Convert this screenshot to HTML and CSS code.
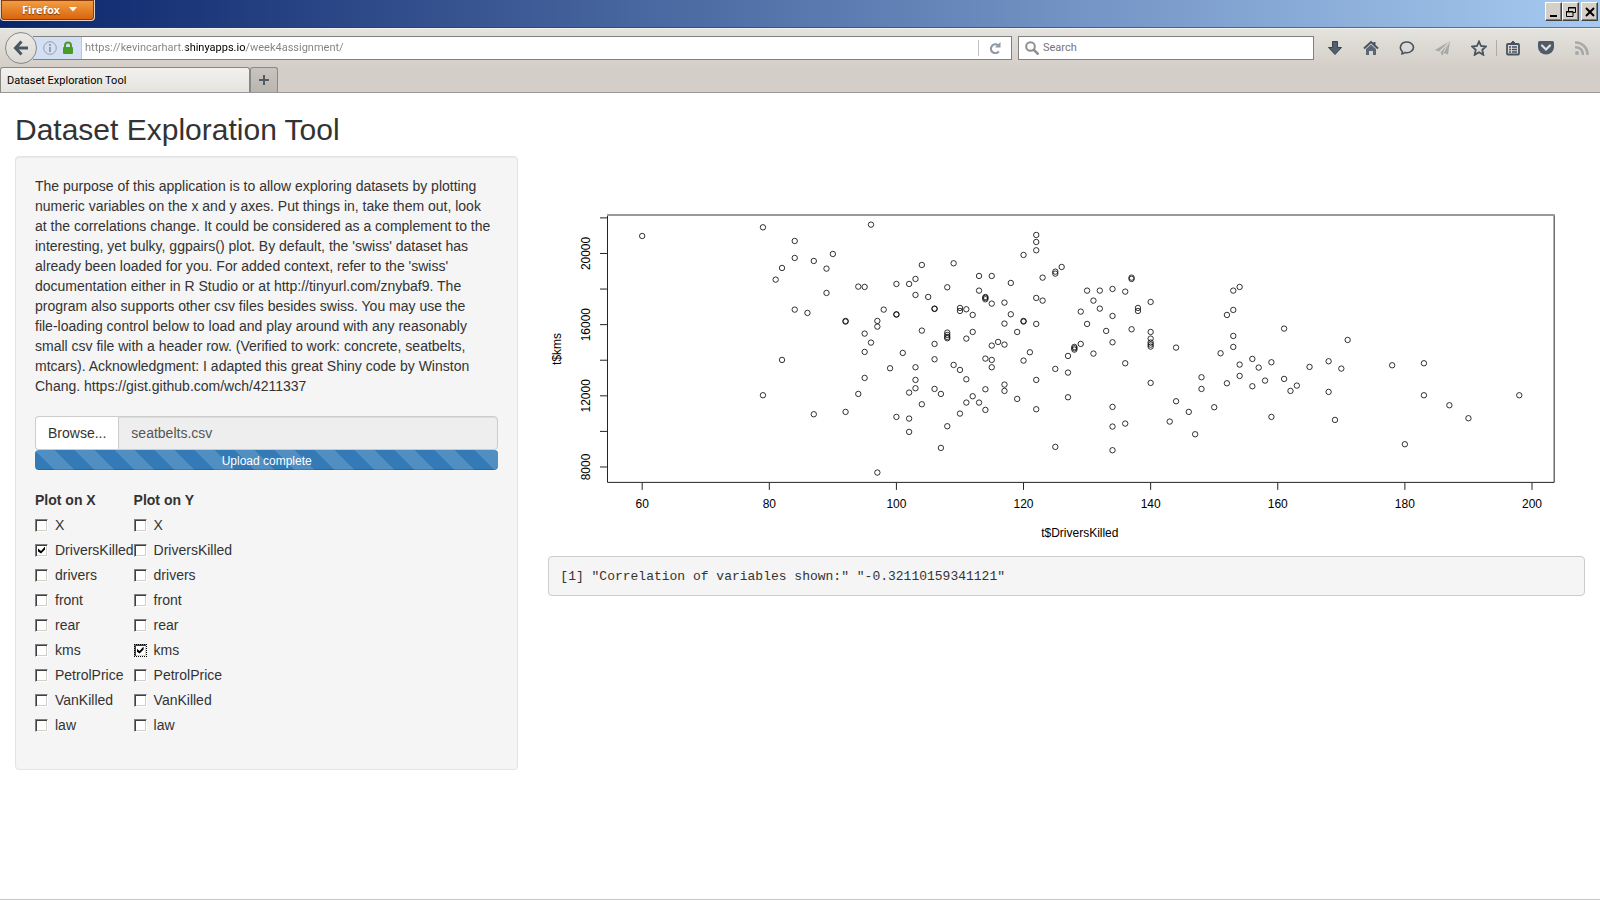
FILE: index.html
```html
<!DOCTYPE html>
<html lang="en">
	<head>
		<meta charset="utf-8">
		<title>Dataset Exploration Tool</title>
		<link rel="stylesheet" href="styles.css">
	</head>
	<body>
		<header class="browser">
			<div class="titlebar">
				<button class="firefox-btn">Firefox
					<svg width="8" height="5" viewBox="0 0 8 5"><path d="M0 0h8L4 4.5z" fill="#fff"/></svg>
				</button>
				<div class="window-btns">
					<button aria-label="Minimize"><svg width="12" height="12" viewBox="0 0 12 12"><path d="M2 9h7v2H2z"/></svg></button>
					<button aria-label="Restore"><svg width="12" height="12" viewBox="0 0 12 12" fill="none" stroke="#000"><path d="M3.5 5V1.5h7v5H8M3 2h8M1.5 5.500h6.500v5H1.500zM1 6h7"/></svg></button>
					<button class="close" aria-label="Close"><svg width="12" height="12" viewBox="0 0 12 12" fill="none" stroke="#000" stroke-width="2"><path d="M2 2l8 8M10 2l-8 8"/></svg></button>
				</div>
			</div>

			<div class="navbar">
				<button class="back" aria-label="Back">
					<svg width="16" height="16" viewBox="0 0 16 16" fill="none" stroke="#4a5763" stroke-width="3"><path d="M8.500 1.500L2.500 8l6 6.500M3 8h12"/></svg>
				</button>
				<div class="urlbar">
					<div class="identity">
						<svg width="14" height="14" viewBox="0 0 14 14" fill="none" stroke="#989ea6"><circle cx="7" cy="7" r="6.300"/><path d="M7 3v2M7 6v5" stroke-width="2"/></svg>
						<svg width="10" height="13" viewBox="0 0 10 13"><path d="M2 7V4.500a3 3 0 0 1 6 0V7" fill="none" stroke="#4b9b2a" stroke-width="2"/><rect y="6" width="10" height="7" rx="1" fill="#4b9b2a"/></svg>
					</div>
					<input class="url" type="text" aria-label="Address" value="https://kevincarhart.shinyapps.io/week4assignment/">
					<button class="reload" aria-label="Reload">
						<svg width="12" height="12" viewBox="0 0 12 12"><path d="M9 3.200A4.400 4.400 0 1 0 9.800 9.500" fill="none" stroke="#8d99a6" stroke-width="2.200"/><path d="M11.500 0v5.500H6z" fill="#8d99a6"/></svg>
					</button>
				</div>
				<div class="searchbar">
					<svg width="14" height="14" viewBox="0 0 14 14" fill="none" stroke="#8f8f8f" stroke-width="2"><circle cx="5.500" cy="5.500" r="4.300"/><path d="M8.500 8.500l5 5" stroke-width="2.500"/></svg>
					<input type="text" aria-label="Search" placeholder="Search">
				</div>
				<div class="tools">
					<button aria-label="Downloads"><svg width="16" height="16" viewBox="0 0 16 16" fill="#52606e" stroke="#36424e"><path d="M5.500 1.500h5v6h4L8 14.500l-6.500-7h4z"/></svg></button>
					<button aria-label="Home"><svg width="16" height="16" viewBox="0 0 16 16"><path d="M1 8.500l7-6.500 7 6.500M11.500 2v3" fill="none" stroke="#465360" stroke-width="2"/><path d="M3 9l5-4.500L13 9v6h-3v-4H6v4H3z" fill="#5b6874"/></svg></button>
					<button aria-label="Chat"><svg width="16" height="16" viewBox="0 0 16 16" fill="none" stroke="#465360" stroke-width="1.600"><path d="M3.500 11.800C-.5 8.500 1.500 2 7.700 2s8.800 6 4.800 9c-2 1.600-4.300 2-6.300 1.500-1.500 1.300-2.700 1.500-3.900 1.500 1-.5 1.400-1.200 1.200-2.200z"/></svg></button>
					<button aria-label="Share"><svg width="16" height="16" viewBox="0 0 16 16" fill="#a7a8a8"><path d="M15 1L0 10l4 1.500zM15 1L5.500 12.500 7 15.500l2-2.500 4 1.500z"/><path d="M14 2L5 11.500M14 2L8.500 12.500" stroke="#dad7d0" fill="none"/></svg></button>
					<button class="star" aria-label="Bookmark this page"><svg width="16" height="16" viewBox="0 0 16 16" fill="none" stroke="#465360" stroke-width="1.800"><path d="M8 1.500l2 4.500 5 .5-3.700 3.300 1 5L8 12.300l-4.300 2.500 1-5L1 6.500 6 6z"/></svg></button>
					<span class="separator"></span>
					<button class="list" aria-label="Bookmarks"><svg width="16" height="16" viewBox="0 0 16 16" fill="none" stroke="#465360"><rect x="2" y="4" width="12" height="10.500" rx="1" stroke-width="1.800"/><path d="M5 4l3-3 3 3z" fill="#465360"/><path d="M4 7h2M7 7h5M4 9.500h2M7 9.500h5M4 12h2M7 12h5" stroke-width="1.300"/></svg></button>
					<button aria-label="Pocket"><svg width="16" height="16" viewBox="0 0 16 16"><path d="M1.500 1h13Q16 1 16 2.500V7a8 7.500 0 0 1-16 0V2.500Q0 1 1.500 1z" fill="#4f5d6b"/><path d="M4 5.500l4 4 4-4" fill="none" stroke="#e4e2dc" stroke-width="2.200" stroke-linecap="round"/></svg></button>
					<button aria-label="Subscribe"><svg width="16" height="16" viewBox="0 0 16 16" fill="none" stroke="#a7a8a8" stroke-width="2.500"><circle cx="3" cy="13" r="2" fill="#a7a8a8" stroke="none"/><path d="M1 7.200A7 7 0 0 1 8.800 15M1 2.500A12 12 0 0 1 13.500 15"/></svg></button>
				</div>
			</div>

			<div class="tabs">
				<button class="tab">Dataset Exploration Tool</button>
				<button class="new-tab" aria-label="New tab"><svg width="10" height="10" viewBox="0 0 10 10"><path d="M4 0h2v4h4v2H6v4H4V6H0V4h4z" fill="#4f5b66"/></svg></button>
			</div>
		</header>

		<main class="page">
			<h2>Dataset Exploration Tool</h2>

			<div class="row">
				<form class="well">
					<p>
						The purpose of this application is to allow exploring datasets by plotting<br>
						numeric variables on the x and y axes. Put things in, take them out, look<br>
						at the correlations change. It could be considered as a complement to the<br>
						interesting, yet bulky, ggpairs() plot. By default, the 'swiss' dataset has<br>
						already been loaded for you. For added context, refer to the 'swiss'<br>
						documentation either in R Studio or at http://tinyurl.com/znybaf9. The<br>
						program also supports other csv files besides swiss. You may use the<br>
						file-loading control below to load and play around with any reasonably<br>
						small csv file with a header row. (Verified to work: concrete, seatbelts,<br>
						mtcars). Acknowledgment: I adapted this great Shiny code by Winston<br>
						Chang. https://gist.github.com/wch/4211337
					</p>

					<div class="file-group">
						<label class="browse">Browse...<input type="file" accept=".csv"></label>
						<input class="file-name" type="text" aria-label="Selected file" value="seatbelts.csv" readonly>
					</div>
					<div class="progress">Upload complete</div>

					<div class="variables">
						<fieldset>
							<legend>Plot on X</legend>
							<label><input type="checkbox" name="x">X</label>
							<label><input type="checkbox" name="x" checked>DriversKilled</label>
							<label><input type="checkbox" name="x">drivers</label>
							<label><input type="checkbox" name="x">front</label>
							<label><input type="checkbox" name="x">rear</label>
							<label><input type="checkbox" name="x">kms</label>
							<label><input type="checkbox" name="x">PetrolPrice</label>
							<label><input type="checkbox" name="x">VanKilled</label>
							<label><input type="checkbox" name="x">law</label>
						</fieldset>
						<fieldset>
							<legend>Plot on Y</legend>
							<label><input type="checkbox" name="y">X</label>
							<label><input type="checkbox" name="y">DriversKilled</label>
							<label><input type="checkbox" name="y">drivers</label>
							<label><input type="checkbox" name="y">front</label>
							<label><input type="checkbox" name="y">rear</label>
							<label><input class="focused" type="checkbox" name="y" checked>kms</label>
							<label><input type="checkbox" name="y">PetrolPrice</label>
							<label><input type="checkbox" name="y">VanKilled</label>
							<label><input type="checkbox" name="y">law</label>
						</fieldset>
					</div>
				</form>

				<div class="output">
					<svg class="plot" id="plot" viewBox="0 0 1037 400" role="img" aria-label="Scatter plot of kms against DriversKilled">
						<path class="frame" d="M59.500 59v267.500H1006.500V59"/>
						<path class="frame-top" d="M59 59h948"/>
						<text x="532" y="381">t$DriversKilled</text>
						<text transform="translate(13 193) rotate(-90)">t$kms</text>
					</svg>
					<pre>[1] "Correlation of variables shown:" "-0.32110159341121"</pre>
				</div>
			</div>
		</main>

		<script src="plot.js"></script>
	</body>
</html>
```
FILE: styles.css
```css
* {
	box-sizing: border-box;
}

body {
	margin: 0;
	min-height: 100vh;
	background: #fff;
	border-bottom: 1px solid #c8c8c8;
	color: #333;
	font-family: "Liberation Sans", Arial, sans-serif;
	font-size: 14px;
	line-height: 20px;
}

button,
input {
	font-family: inherit;
}

button {
	display: flex;
	align-items: center;
	justify-content: center;
	margin: 0;
	padding: 0;
	border: none;
	background: none;
}

/* Browser window */
.browser {
	background: #d4cec8;
	border-bottom: 1px solid #999;
	font-family: Roboto, Tahoma, sans-serif;
	font-size: 11px;
}

.titlebar {
	display: flex;
	justify-content: space-between;
	align-items: flex-start;
	height: 28px;
	background: linear-gradient(90deg, #0a246a, #a6caf0);
	border-bottom: 1px solid rgba(30, 60, 110, 0.6);
}

.firefox-btn {
	gap: 9px;
	width: 95px;
	height: 21px;
	padding: 0 0 2px 4px;
	background: linear-gradient(#f3a143, #d8620c);
	border: 1px solid #dfd2cf;
	border-top: none;
	border-radius: 0 0 4px 4px;
	box-shadow: inset 0 0 0 1px #8a3c0c;
	color: #fff;
	font-family: "Noto Sans", Tahoma, sans-serif;
	font-size: 11px;
	font-weight: bold;
	text-shadow: 0 1px 1px #7a3500;
}

.window-btns {
	display: flex;
	padding: 2px 2px 0 0;
}

.window-btns button {
	width: 17px;
	height: 19px;
	background: #d4d0c8;
	border: 1px solid;
	border-color: #fff #404040 #404040 #fff;
	box-shadow: inset -1px -1px #808080;
}

.window-btns .close {
	margin-left: 2px;
}

.navbar {
	display: flex;
	align-items: center;
	height: 39px;
	padding: 0 0 1px 5px;
	background: linear-gradient(#e4e3dd, #d4cec8);
	border-top: 1px solid #f1f0ec;
}

.back {
	z-index: 1;
	width: 32px;
	height: 32px;
	background: linear-gradient(#eceae6, #dcd9d4);
	border: 1px solid #888;
	border-radius: 50%;
}

.urlbar,
.searchbar {
	display: flex;
	align-items: center;
	height: 24px;
	background: #fff;
	border: 1px solid #808080;
}

.urlbar {
	flex: 1;
	margin: 0 6px 0 -4px;
	border-left: none;
}

.identity {
	display: flex;
	align-items: center;
	gap: 6px;
	height: 100%;
	padding: 0 8px 0 10px;
	background: #d3dff2;
	border-right: 1px solid #b9c6da;
}

.url {
	flex: 1;
	min-width: 0;
	padding: 0 0 0 3px;
	border: none;
	outline: none;
	/* the domain is darker than the rest of the address */
	background: linear-gradient(90deg, #808080 104px, #000 104px, #000 164px, #808080 164px);
	background-clip: text;
	color: transparent;
	font-size: 11px;
}

.reload {
	width: 33px;
	height: 16px;
	border-left: 1px solid #c4c4c4;
}

.searchbar {
	width: 296px;
	gap: 4px;
	padding-left: 6px;
}

.searchbar input {
	flex: 1;
	min-width: 0;
	padding: 0;
	border: none;
	outline: none;
	font-size: 11px;
}

.searchbar input::placeholder {
	color: #757575;
}

.tools {
	display: flex;
	align-items: center;
	padding-left: 3px;
}

.tools button {
	width: 36px;
	height: 24px;
}

.tools .star {
	width: 35px;
}

.tools .list {
	width: 31px;
}

.separator {
	width: 1px;
	height: 16px;
	background: #b0aca6;
}

.tabs {
	display: flex;
	height: 25px;
}

.tab {
	justify-content: flex-start;
	width: 250px;
	padding-left: 6px;
	background: linear-gradient(#f2f1ee, #e4e3dd);
	border: 1px solid #888;
	border-bottom: none;
	border-radius: 3px 3px 0 0;
	color: #000;
	font-size: 11px;
}

.new-tab {
	width: 28px;
	background: linear-gradient(#c9c5be, #bab6af);
	border: 1px solid #888;
	border-bottom: none;
	border-radius: 3px 3px 0 0;
}

/* Page */
.page {
	padding: 20px 15px 0;
}

h2 {
	margin: 0 0 10px;
	font-size: 30px;
	font-weight: 500;
	line-height: 33px;
}

.row {
	display: grid;
	grid-template-columns: calc(33.333% - 20px) 1fr;
	gap: 30px;
	align-items: start;
}

.well {
	padding: 19px 19px 34px;
	background: #f5f5f5;
	border: 1px solid #e3e3e3;
	border-radius: 4px;
	box-shadow: inset 0 1px 1px rgba(0, 0, 0, 0.05);
}

.well p {
	margin: 0 0 20px;
}

.file-group {
	display: flex;
	height: 34px;
}

.browse {
	padding: 6px 12px;
	background: #fff;
	border: 1px solid #ccc;
	border-right: none;
	border-radius: 4px 0 0 4px;
}

.browse input {
	display: none;
}

.file-name {
	flex: 1;
	min-width: 0;
	padding: 6px 12px;
	background: #eee;
	border: 1px solid #ccc;
	border-radius: 0 4px 4px 0;
	box-shadow: inset 0 1px 1px rgba(0, 0, 0, 0.075);
	color: #555;
	font-size: 14px;
}

.progress {
	height: 20px;
	margin-bottom: 20px;
	background: linear-gradient(45deg, rgba(255, 255, 255, 0.15) 25%, transparent 25%, transparent 50%, rgba(255, 255, 255, 0.15) 50%, rgba(255, 255, 255, 0.15) 75%, transparent 75%) 0 0 / 40px 40px #337ab7;
	border-radius: 4px;
	box-shadow: inset 0 -1px 0 rgba(0, 0, 0, 0.15);
	color: #fff;
	font-size: 12px;
	line-height: 22px;
	text-align: center;
}

.variables {
	display: flex;
}

fieldset {
	margin: 0;
	padding: 0;
	border: none;
}

legend {
	padding: 0;
	font-weight: bold;
}

fieldset label {
	display: flex;
	align-items: center;
	gap: 7px;
	margin-top: 5px;
}

input[type="checkbox"] {
	appearance: none;
	width: 13px;
	height: 13px;
	margin: 0;
	background: #fff;
	border: 1px solid;
	border-color: #808080 #fff #fff #808080;
	box-shadow: inset 1px 1px #404040, inset -1px -1px #d4d0c8;
}

input[type="checkbox"]:checked::before {
	content: "";
	display: block;
	width: 7px;
	height: 7px;
	margin: 2px;
	background: #000;
	clip-path: polygon(0 29%, 43% 65%, 100% 0, 100% 43%, 43% 100%, 0 71%);
}

input.focused {
	outline: 1px dotted #000;
	outline-offset: -1px;
}

.plot {
	display: block;
	width: 100%;
}

.plot text {
	fill: #000;
	font-size: 12px;
	text-anchor: middle;
}

.plot .frame,
.plot .tick {
	fill: none;
	stroke: #222;
}

.plot .frame-top {
	stroke: #999;
	stroke-width: 2;
}

.plot circle {
	fill: none;
	stroke: #000;
	stroke-width: 0.8;
}

pre {
	margin: 0;
	padding: 10px 11px 8px;
	background: #f5f5f5;
	border: 1px solid #ccc;
	border-radius: 4px;
	font-family: "Liberation Mono", "Courier New", monospace;
	font-size: 13px;
	overflow: auto;
}
```
FILE: plot.js
```js
const plot = document.getElementById("plot");

// DriversKilled -> marker heights, counted down from y = 44 in thirds of a unit
const points = {
	60: [108], 79: [82, 586], 81: [239], 82: [204, 480], 84: [123, 174, 329],
	86: [339], 87: [183, 643], 89: [206, 279], 90: [162],
	92: [363, 365, 636], 94: [260, 582], 95: [261, 401, 456, 534],
	96: [74, 428], 97: [363, 380, 818], 98: [329], 99: [505],
	100: [252, 343, 344, 651], 101: [459], 102: [252, 578, 656, 696],
	103: [237, 285, 502, 540, 565], 104: [195, 392, 613], 105: [291],
	106: [326, 327, 432, 478, 567], 107: [582, 744],
	108: [262, 398, 405, 411, 415, 679], 109: [190, 495],
	110: [324, 333, 510, 641], 111: [328, 416, 538, 608],
	112: [345, 396, 589], 113: [228, 272, 608],
	114: [291, 294, 298, 476, 568, 630], 115: [228, 311, 437, 480, 502],
	116: [426], 117: [308, 371, 434, 554, 573], 118: [249, 343],
	119: [396, 597], 120: [165, 363, 365, 482], 121: [457],
	122: [105, 126, 151, 294, 372, 540, 628], 123: [233, 302],
	125: [215, 221, 507, 741], 126: [201], 127: [468, 518, 592],
	128: [441, 445, 449], 129: [335, 432], 130: [272, 372],
	131: [302, 461], 132: [272, 326], 133: [393],
	134: [267, 348, 427, 621, 680, 751], 136: [275, 490, 671],
	137: [233, 237, 388], 138: [324, 333],
	140: [306, 396, 416, 428, 434, 440, 549], 143: [665], 144: [443, 604],
	146: [636], 147: [703], 148: [532, 567], 150: [622], 151: [460],
	152: [345, 550], 153: [272, 330, 408, 441], 154: [261, 494, 528],
	156: [477, 559], 157: [503], 158: [542], 159: [487, 651],
	161: [386, 537], 162: [573], 163: [557], 165: [501], 168: [484, 576],
	169: [660], 170: [506], 171: [420], 178: [496], 180: [733],
	183: [490, 586], 187: [616], 190: [655], 198: [586]
};

function add(name, attrs, text) {
	const el = document.createElementNS("http://www.w3.org/2000/svg", name);
	for (const key in attrs) el.setAttribute(key, attrs[key]);
	if (text) el.textContent = text;
	plot.appendChild(el);
}

const scaleX = (killed) => 94.2 + (killed - 60) * 6.358;
const scaleY = (kms) => 97.5 + (20000 - kms) * 0.0178;

for (let v = 60; v <= 200; v += 20) {
	const x = scaleX(v);
	add("path", { class: "tick", d: `M${x} 327v7` });
	add("text", { x: x, y: 352 }, v);
}

for (let v = 8000; v <= 22000; v += 2000) {
	const y = scaleY(v);
	add("path", { class: "tick", d: `M52 ${y}h7` });
	if (v % 4000 === 0) {
		add("text", { transform: `translate(42 ${y}) rotate(-90)` }, v);
	}
}

for (const killed in points) {
	for (const y of points[killed]) {
		add("circle", { cx: scaleX(killed), cy: 44 + y / 3, r: 2.7 });
	}
}
```
